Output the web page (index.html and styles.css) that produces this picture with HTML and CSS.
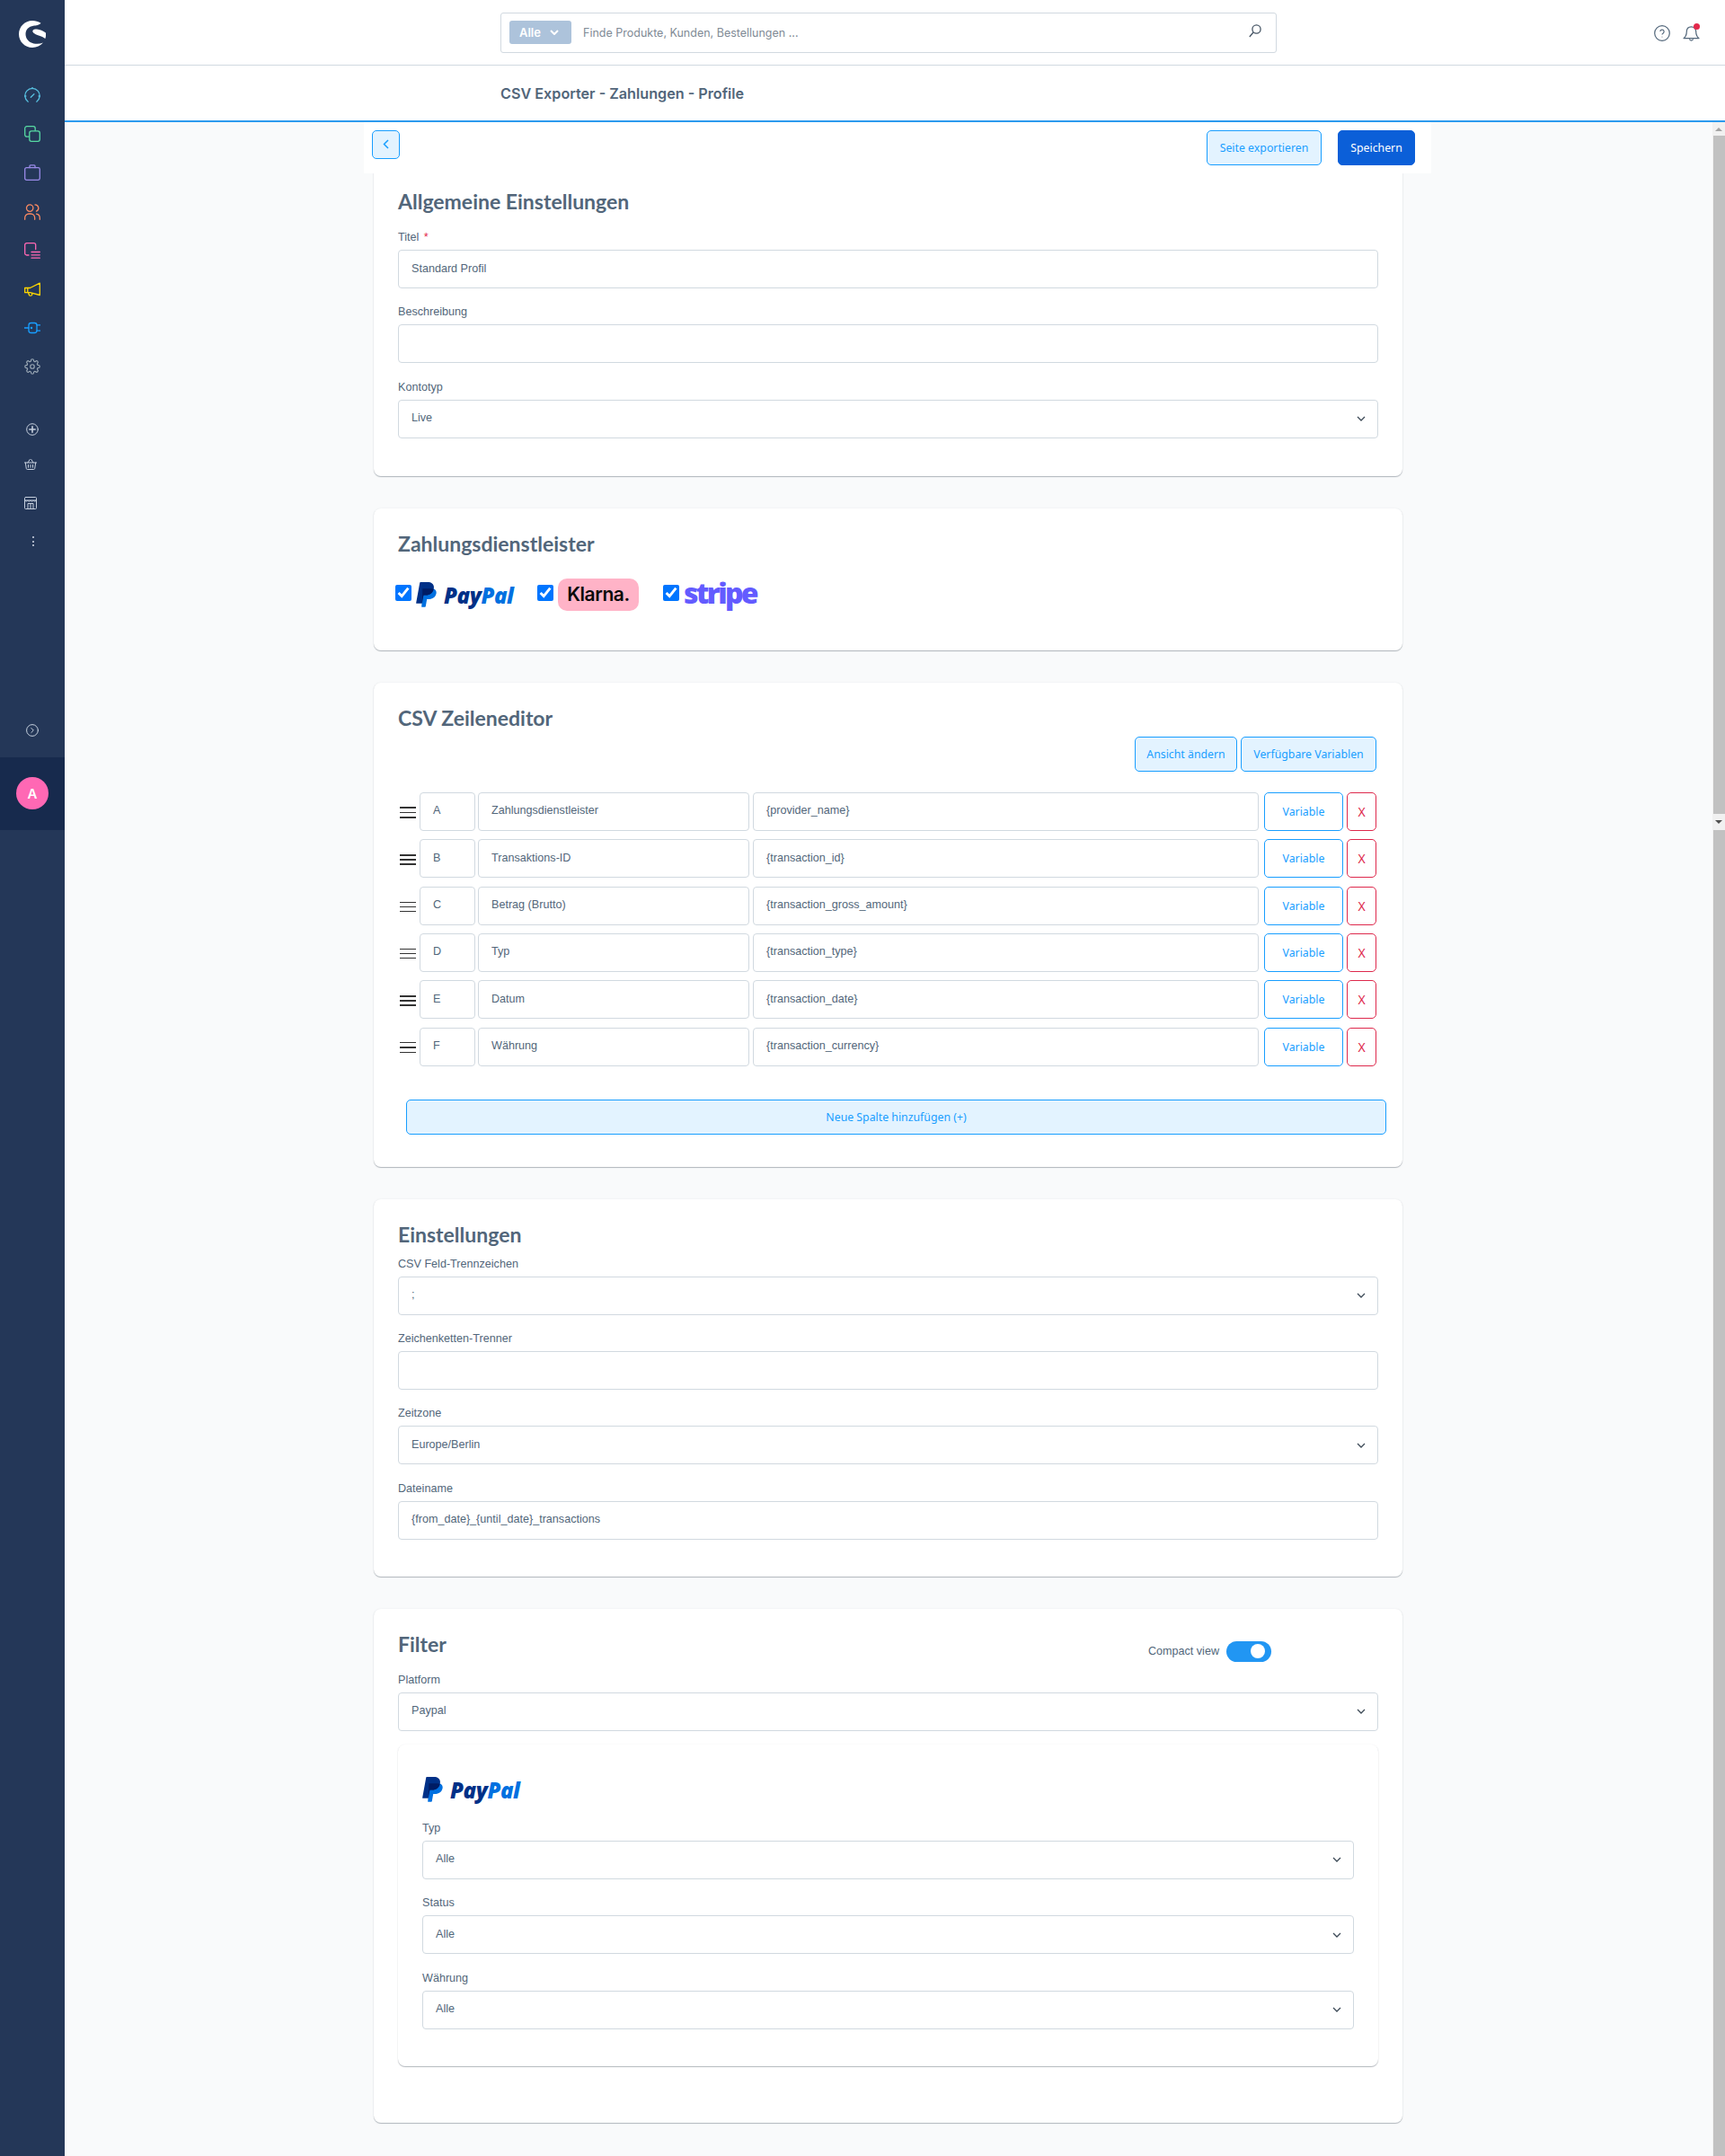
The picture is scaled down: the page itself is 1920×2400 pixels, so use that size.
FILE: index.html
```html
<!DOCTYPE html>
<html lang="de">
<head>
<meta charset="utf-8">
<title>CSV Exporter - Zahlungen - Profile</title>
<link rel="stylesheet" href="styles.css">
</head>
<body>
<div class="app">
  <aside class="sidebar">
    <div class="logo">
      <svg width="30" height="30" viewBox="0 0 30 30"><path fill="#fff" d="M24.5 2.7C21.5 1 18.5 0 15 0 6.7 0 0 6.7 0 15s6.700 15 15 15c4.800 0 9-2 12-5.400-3.500 1.400-7 1.600-10.500.8C11 24.200 7.500 20 7.500 15c0-5 3.500-8.500 8.500-9.300 3-.5 7-.7 8.500-3z"/><path fill="#fff" d="M15.800 10.500c-1.800 2.300 1.700 4.400 6.200 6 3 1 5.500 2 7.300 3.500.8-2 1-4.300.600-6.400-3-2.400-6.500-3.800-9.900-4.100-1.800-.1-3.300 0-4.200 1z"/></svg>
    </div>
    <nav class="nav-main">
      <div class="nav-item"><svg class="ico c-dash" viewBox="0 0 18 18"><path d="M4.200 16.200A8.200 8.200 0 1 1 13.800 16.200"/><path d="M9 .3v1.400M7.300 11.300l3.600-3.600M.7 10h1.200M16.100 10h1.200"/></svg></div>
      <div class="nav-item"><svg class="ico c-prod" viewBox="0 0 18 18"><rect x=".7" y=".7" width="11.500" height="11.500" rx="2.200"/><rect class="fill-side" x="5.800" y="5.800" width="11.500" height="11.500" rx="2.200"/></svg></div>
      <div class="nav-item"><svg class="ico c-ord" viewBox="0 0 18 18"><rect x=".7" y="3.700" width="16.600" height="13.600" rx="1.800"/><path d="M6 3.700V1.800c0-.6.400-1 1-1h4c.6 0 1 .4 1 1v1.900"/></svg></div>
      <div class="nav-item"><svg class="ico c-cust" viewBox="0 0 18 18"><circle cx="6.200" cy="4.600" r="3.700"/><path d="M.7 17.300v-1.800a4.500 4.500 0 0 1 4.500-4.500h2a4.500 4.500 0 0 1 4.500 4.500v1.800M12 .9a3.800 3.800 0 0 1 1.500 7.300M13.500 11.200a4.500 4.500 0 0 1 3.800 4.400v1.700"/></svg></div>
      <div class="nav-item"><svg class="ico c-cont" viewBox="0 0 18 18"><path d="M5 14H2.700a2 2 0 0 1-2-2V2.700a2 2 0 0 1 2-2h8a2 2 0 0 1 2 2v4.800M8 10.500h9.300M8 13.800h9.300M8 17.200h9.300"/></svg></div>
      <div class="nav-item"><svg class="ico c-mark" viewBox="0 0 18 18"><path d="M17.300 2.200v13.300L6.500 12.700H.7V7.500h5.800zM3.800 7.500v5.200M4.500 13l1 2.600c.3.800 3 .9 3.200-.6l-.1-1.400"/></svg></div>
      <div class="nav-item"><svg class="ico c-ext" viewBox="0 0 18 18"><rect x="5" y="3.500" width="9" height="11" rx="2.500"/><path d="M0 9h5M14 5.800h4M14 12.200h4"/><circle cx="8" cy="9" r=".6"/></svg></div>
      <div class="nav-item"><svg class="ico c-set" viewBox="0 0 24 24"><circle cx="12" cy="12" r="3"/><path d="M19.400 15a1.650 1.650 0 0 0 .33 1.820l.06.06a2 2 0 0 1-2.830 2.830l-.06-.06a1.650 1.650 0 0 0-1.820-.33 1.650 1.650 0 0 0-1 1.510V21a2 2 0 0 1-4 0v-.09A1.650 1.650 0 0 0 9 19.400a1.650 1.650 0 0 0-1.820.33l-.06.06a2 2 0 0 1-2.830-2.830l.06-.06a1.650 1.650 0 0 0 .33-1.820 1.650 1.650 0 0 0-1.510-1H3a2 2 0 0 1 0-4h.09A1.650 1.650 0 0 0 4.600 9a1.650 1.650 0 0 0-.33-1.820l-.06-.06a2 2 0 0 1 2.830-2.830l.06.06a1.650 1.650 0 0 0 1.820.33H9a1.650 1.650 0 0 0 1-1.510V3a2 2 0 0 1 4 0v.09a1.650 1.650 0 0 0 1 1.510 1.650 1.650 0 0 0 1.820-.33l.06-.06a2 2 0 0 1 2.830 2.830l-.06.06a1.650 1.650 0 0 0-.33 1.820V9a1.650 1.650 0 0 0 1.510 1H21a2 2 0 0 1 0 4h-.09a1.650 1.650 0 0 0-1.510 1z"/></svg></div>
    </nav>
    <nav class="nav-sub">
      <div class="sub-item sub-first"><svg class="sub-ico" viewBox="0 0 14 14"><circle cx="7" cy="7" r="6.300"/><path class="heavy" d="M7 3.800v6.400M3.800 7h6.400"/></svg></div>
      <div class="sub-item sub-shift"><svg class="sub-ico" viewBox="0 0 14 14"><path d="M.5 5h13M1.300 5l1 6.500c.1.700.5 1 1.200 1h7c.7 0 1.100-.3 1.200-1l1-6.500M4 5l2.200-3.500M10 5L7.800 1.500M4.500 7.500v2.800M7 7.500v2.800M9.500 7.500v2.800"/></svg></div>
      <div class="sub-item sub-shift"><svg class="sub-ico" viewBox="0 0 14 14"><rect x=".5" y=".5" width="13" height="13" rx="1"/><path d="M.5 4h13M.7 4c.8 1.400 2.300 1.400 3.100 0 .8 1.400 2.300 1.400 3.200 0 .8 1.400 2.300 1.400 3.200 0 .8 1.400 2.300 1.400 3.100 0M4 13.500V7.500h6v6M7 7.500v6"/></svg></div>
      <div class="sub-item sub-dots"><span class="dot"></span><span class="dot"></span><span class="dot"></span></div>
    </nav>
    <div class="sub-item sub-expand"><svg class="sub-ico" viewBox="0 0 14 14"><circle cx="7" cy="7" r="6.400"/><path d="M5.800 4.500L8.300 7l-2.500 2.500"/></svg></div>
    <div class="user"><div class="avatar">A</div></div>
  </aside>

  <div class="main">
    <header class="topbar">
      <div class="search">
        <div class="search-type">Alle <svg class="pill-chev" viewBox="0 0 10 6"><path d="M1 1l4 4 4-4"/></svg></div>
        <span class="search-text">Finde Produkte, Kunden, Bestellungen ...</span>
        <svg class="search-ico" viewBox="0 0 14 15"><circle cx="8.500" cy="5.500" r="4.600"/><path d="M5 9L.8 14"/></svg>
      </div>
      <div class="top-actions">
        <svg class="help" viewBox="0 0 18 18"><ellipse cx="9" cy="9" rx="8.300" ry="8.300"/><path d="M6.900 7.100a2.100 2.100 0 1 1 3.300 1.800c-.8.500-1.200.9-1.200 1.700"/><circle class="solid" cx="9" cy="13" r=".5"/></svg>
        <div class="bell-wrap">
          <svg class="bell" viewBox="0 0 19 19"><path d="M9.500 1.800c-3.200 0-5.200 2.300-5.200 5.400 0 3.600-.8 5.400-3.300 7.500h17c-2.500-2.100-3.300-3.900-3.300-7.500 0-3.100-2-5.400-5.200-5.400zM7.500 15.500c.4 2.100 3.600 2.100 4 0"/></svg>
          <span class="bell-dot"></span>
        </div>
      </div>
    </header>
    <div class="smartbar"><h1 class="page-title">CSV Exporter - Zahlungen - Profile</h1></div>

    <div class="workspace">
      <div class="content">
        <div class="actions">
          <button class="btn btn-back"><svg class="back-chev" viewBox="0 0 7 11"><path d="M6 1L1.500 5.500 6 10"/></svg></button>
          <div class="actions-right">
            <button class="btn btn-soft btn-export">Seite exportieren</button>
            <button class="btn btn-primary">Speichern</button>
          </div>
        </div>

        <section class="card card-first">
          <h2 class="card-title">Allgemeine Einstellungen</h2>
          <div class="field"><div class="label">Titel <span class="req">*</span></div><div class="control">Standard Profil</div></div>
          <div class="field"><div class="label">Beschreibung</div><div class="control"></div></div>
          <div class="field"><div class="label">Kontotyp</div><div class="control select"><span>Live</span><svg class="chev" viewBox="0 0 10 6"><path d="M1 1l4 4 4-4"/></svg></div></div>
        </section>

        <section class="card">
          <h2 class="card-title">Zahlungsdienstleister</h2>
          <div class="providers">
            <label class="provider"><input type="checkbox" checked>
              <span class="paypal"><svg class="pp-mark" viewBox="0 0 23 28"><path fill="#0070e0" d="M7.500 7h9c3.800 0 6.700 1.700 6.100 5.600-.6 3.800-3.700 6.300-7.400 6.300h-3l-1.400 8.100a.8.8 0 0 1-.8.700H6.200z"/><path fill="#003087" d="M4.300.6A.8.8 0 0 1 5.100 0H13c4.300 0 7.600 2.300 6.800 6.900-.8 4.800-4.600 7.600-8.800 7.600H8.400L7 23a.8.8 0 0 1-.8.700H.8a.6.6 0 0 1-.6-.7z"/><path fill="#001c64" d="M7.300 7.200h9.200c.9 0 2.300.300 3.100.8-.5 3.800-4.100 6.500-8.600 6.500H8.400L7 21z"/></svg><span class="pp-word"><span class="pp-pay">Pay</span><span class="pp-pal">Pal</span></span></span>
            </label>
            <label class="provider"><input type="checkbox" checked><span class="klarna">Klarna.</span></label>
            <label class="provider"><input type="checkbox" checked><span class="stripe">stripe</span></label>
          </div>
        </section>

        <section class="card card-editor">
          <h2 class="card-title">CSV Zeileneditor</h2>
          <div class="editor-actions">
            <button class="btn btn-soft btn-view">Ansicht ändern</button>
            <button class="btn btn-soft btn-vars">Verfügbare Variablen</button>
          </div>
          <div class="rows">
            <div class="row"><div class="drag mid"><i></i><i></i><i></i></div><div class="control cell-key">A</div><div class="control cell-name">Zahlungsdienstleister</div><div class="control cell-val">{provider_name}</div><button class="btn btn-line btn-var">Variable</button><button class="btn btn-del">X</button></div>
            <div class="row"><div class="drag thick"><i></i><i></i><i></i></div><div class="control cell-key">B</div><div class="control cell-name">Transaktions-ID</div><div class="control cell-val">{transaction_id}</div><button class="btn btn-line btn-var">Variable</button><button class="btn btn-del">X</button></div>
            <div class="row"><div class="drag"><i></i><i></i><i></i></div><div class="control cell-key">C</div><div class="control cell-name">Betrag (Brutto)</div><div class="control cell-val">{transaction_gross_amount}</div><button class="btn btn-line btn-var">Variable</button><button class="btn btn-del">X</button></div>
            <div class="row"><div class="drag"><i></i><i></i><i></i></div><div class="control cell-key">D</div><div class="control cell-name">Typ</div><div class="control cell-val">{transaction_type}</div><button class="btn btn-line btn-var">Variable</button><button class="btn btn-del">X</button></div>
            <div class="row"><div class="drag thick"><i></i><i></i><i></i></div><div class="control cell-key">E</div><div class="control cell-name">Datum</div><div class="control cell-val">{transaction_date}</div><button class="btn btn-line btn-var">Variable</button><button class="btn btn-del">X</button></div>
            <div class="row"><div class="drag mid"><i></i><i></i><i></i></div><div class="control cell-key">F</div><div class="control cell-name">Währung</div><div class="control cell-val">{transaction_currency}</div><button class="btn btn-line btn-var">Variable</button><button class="btn btn-del">X</button></div>
          </div>
          <button class="btn btn-soft btn-add">Neue Spalte hinzufügen (+)</button>
        </section>

        <section class="card">
          <h2 class="card-title card-title-tight">Einstellungen</h2>
          <div class="field"><div class="label">CSV Feld-Trennzeichen</div><div class="control select"><span>;</span><svg class="chev" viewBox="0 0 10 6"><path d="M1 1l4 4 4-4"/></svg></div></div>
          <div class="field"><div class="label">Zeichenketten-Trenner</div><div class="control"></div></div>
          <div class="field"><div class="label">Zeitzone</div><div class="control select"><span>Europe/Berlin</span><svg class="chev" viewBox="0 0 10 6"><path d="M1 1l4 4 4-4"/></svg></div></div>
          <div class="field"><div class="label">Dateiname</div><div class="control">{from_date}_{until_date}_transactions</div></div>
        </section>

        <section class="card card-filter">
          <div class="filter-head">
            <h2 class="card-title">Filter</h2>
            <div class="compact"><span>Compact view</span><div class="toggle"><span class="knob"></span></div></div>
          </div>
          <div class="field field-platform"><div class="label">Platform</div><div class="control select"><span>Paypal</span><svg class="chev" viewBox="0 0 10 6"><path d="M1 1l4 4 4-4"/></svg></div></div>
          <div class="inner">
            <span class="paypal paypal-inner"><svg class="pp-mark" viewBox="0 0 23 28"><path fill="#0070e0" d="M7.500 7h9c3.800 0 6.700 1.700 6.100 5.600-.6 3.800-3.700 6.300-7.400 6.300h-3l-1.400 8.100a.8.8 0 0 1-.8.700H6.200z"/><path fill="#003087" d="M4.300.6A.8.8 0 0 1 5.100 0H13c4.300 0 7.600 2.300 6.800 6.900-.8 4.800-4.600 7.600-8.800 7.600H8.400L7 23a.8.8 0 0 1-.8.700H.8a.6.6 0 0 1-.6-.7z"/><path fill="#001c64" d="M7.300 7.200h9.200c.9 0 2.300.300 3.100.8-.5 3.800-4.100 6.500-8.600 6.500H8.400L7 21z"/></svg><span class="pp-word"><span class="pp-pay">Pay</span><span class="pp-pal">Pal</span></span></span>
            <div class="field"><div class="label">Typ</div><div class="control select"><span>Alle</span><svg class="chev" viewBox="0 0 10 6"><path d="M1 1l4 4 4-4"/></svg></div></div>
            <div class="field"><div class="label">Status</div><div class="control select"><span>Alle</span><svg class="chev" viewBox="0 0 10 6"><path d="M1 1l4 4 4-4"/></svg></div></div>
            <div class="field"><div class="label">Währung</div><div class="control select"><span>Alle</span><svg class="chev" viewBox="0 0 10 6"><path d="M1 1l4 4 4-4"/></svg></div></div>
          </div>
        </section>
      </div>
      <div class="scrollbar">
        <div class="sb-btn"><span class="tri-up"></span></div>
        <div class="sb-thumb"></div>
        <div class="sb-btn sb-btn-down"><span class="tri-down"></span></div>
        <div class="sb-rest"></div>
      </div>
    </div>
  </div>
</div>
</body>
</html>
```
FILE: styles.css
```css
* { box-sizing: border-box; }
html, body { margin: 0; padding: 0; }
body { font-family: "Liberation Sans", Arial, sans-serif; color: #52667a; background: #f9fafb; }
.app { display: flex; width: 1920px; height: 2400px; overflow: hidden; }

/* sidebar */
.sidebar { width: 72px; flex: none; background: #243758; display: flex; flex-direction: column; }
.logo { height: 84.4px; padding: 23px 0 0 21px; }
.logo svg { display: block; }
.nav-item { height: 43.2px; display: flex; align-items: center; justify-content: center; }
.ico { width: 18px; height: 18px; fill: none; stroke-width: 1.3; stroke-linecap: round; stroke-linejoin: round; }
.c-dash { stroke: #57bfdf; }
.c-prod { stroke: #57d9a3; }
.c-ord { stroke: #9a8ae8; }
.c-cust { stroke: #f88962; }
.c-cont { stroke: #ff68b4; }
.c-mark { stroke: #ffd700; }
.c-ext { stroke: #189eff; }
.c-set { stroke: #9aa8b5; stroke-width: 1.6; }
.fill-side { fill: #243758; }
.nav-sub { margin-top: 30.500px; }
.sub-item { height: 43px; display: flex; align-items: center; justify-content: center; }
.sub-first { height: 35px; }
.sub-shift { padding-right: 4px; }
.sub-ico { width: 14px; height: 14px; fill: none; stroke: #c6d0de; stroke-width: 1; stroke-linecap: round; stroke-linejoin: round; }
.sub-ico .heavy { stroke-width: 1.6; }
.sub-dots { flex-direction: column; gap: 2.500px; padding-left: 1px; }
.dot { width: 2px; height: 2px; border-radius: 50%; background: #d6dde8; }
.sub-expand { margin-top: 167px; }
.user { margin-top: 8.500px; height: 81px; background: #172a4d; display: flex; align-items: center; justify-content: center; }
.avatar { width: 36px; height: 36px; border-radius: 50%; background: #ff68b4; color: #fff; font-family: Inter, sans-serif; font-weight: 600; font-size: 15px; display: flex; align-items: center; justify-content: center; }

/* top */
.main { flex: 1; min-width: 0; display: flex; flex-direction: column; }
.topbar { height: 73px; background: #fff; border-bottom: 1px solid #d1d9e0; display: flex; align-items: center; justify-content: center; padding: 0 14px 0 0; position: relative; }
.search { width: 864px; height: 45px; border: 1px solid #d1d9e0; border-radius: 3px; display: flex; align-items: center; padding: 0 16px 0 9px; font-family: Inter, sans-serif; }
.search-type { width: 69px; height: 26px; background: #adc3db; border-radius: 3px; color: #fff; font-size: 13px; font-weight: 600; display: flex; align-items: center; padding-left: 11px; gap: 10px; }
.pill-chev { width: 10px; height: 6px; fill: none; stroke: #fff; stroke-width: 2; }
.search-text { margin-left: 13px; font-size: 12.500px; color: #7f8a95; flex: 1; }
.search-ico { width: 14px; height: 15px; fill: none; stroke: #465565; stroke-width: 1.3; margin-top: -3px; }
.top-actions { position: absolute; right: 28px; top: 28px; display: flex; gap: 14px; }
.help { width: 18px; height: 18px; fill: none; stroke: #52667a; stroke-width: 1.2; }
.help .solid { fill: #52667a; stroke: none; }
.bell-wrap { width: 19px; height: 19px; position: relative; }
.bell { display: block; width: 19px; height: 19px; fill: none; stroke: #52667a; stroke-width: 1.2; stroke-linejoin: round; }
.bell-dot { position: absolute; width: 7px; height: 7px; border-radius: 50%; background: #e3284b; right: 0; top: -2px; }
.smartbar { height: 63px; background: #fff; border-bottom: 2px solid #2c9aee; padding: 0 0 0 485px; display: flex; align-items: center; }
.page-title { margin: 0; font-family: Inter, sans-serif; font-weight: 600; font-size: 16.200px; color: #52667a; }

/* workspace */
.workspace { flex: 1; display: flex; min-height: 0; }
.content { width: 1834px; flex: none; padding-right: 1px; }
.scrollbar { width: 14px; flex: none; display: flex; flex-direction: column; background: #f1f1f1; }
.sb-btn { height: 15px; display: flex; align-items: center; justify-content: center; }
.sb-btn-down { height: 18px; }
.tri-up { width: 0; height: 0; border: 4px solid transparent; border-top: 0; border-bottom: 4px solid #a3a3a3; }
.tri-down { width: 0; height: 0; border: 4px solid transparent; border-bottom: 0; border-top: 4px solid #505050; }
.sb-thumb { height: 755px; background: #c1c1c1; margin-left: 1px; }
.sb-rest { flex: 1; background: #c1c1c1; margin-left: 1px; }

.actions { position: relative; z-index: 1; width: 1188px; height: 57px; margin-left: 333px; background: #fff; display: flex; justify-content: space-between; padding: 9px 18px 0 9px; }
.actions-right { display: flex; gap: 18px; }

.btn { font-family: "Noto Sans", sans-serif; font-size: 12.300px; border-radius: 5px; border: 1px solid #189eff; background: #fff; color: #189eff; display: flex; align-items: center; justify-content: center; padding: 0; cursor: pointer; }
.btn-back { width: 31px; height: 32px; background: #e3f3ff; }
.back-chev { width: 7px; height: 11px; fill: none; stroke: #189eff; stroke-width: 1.5; margin-top: -1px; }
.btn-soft { background: #e3f3ff; }
.btn-export { width: 128px; height: 39px; }
.btn-primary { width: 86px; height: 39px; background: #0b5fd8; border-color: #0b5fd8; color: #fff; }
.btn-view { width: 114px; height: 39px; }
.btn-vars { width: 151px; height: 39px; }
.btn-var { width: 88px; margin-left: 6px; flex: none; }
.btn-del { width: 33px; margin-left: 4px; flex: none; border-color: #de294c; color: #de294c; font-size: 14px; }
.btn-add { width: 1091px; height: 39px; margin: 37px 0 0 9px; }

/* cards */
.card { width: 1145px; margin: 0 auto 36px; padding: 24px 27px 26px; background: #fff; border-radius: 8px; box-shadow: 0 1px 1px rgba(110,120,130,.5), 0 0 2px rgba(110,120,130,.12); }
.card-first { margin-top: -8px; padding-bottom: 27px; }
.card-title { margin: 0 0 14px; font-family: Lato, sans-serif; font-weight: 700; font-size: 23px; line-height: 30px; color: #52667a; }
.card-title-tight { margin-bottom: 7px; }
.field { margin-bottom: 15.330px; }
.label { height: 20px; margin-bottom: 5px; font-size: 12.600px; line-height: 22px; color: #52667a; }
.req { color: #e3284b; margin-left: 2px; }
.control { height: 43px; border: 1px solid #d1d9e0; border-radius: 4px; background: #fff; padding: 0 14px 2px; font-size: 12.600px; color: #52667a; display: flex; align-items: center; }
.select { justify-content: space-between; padding-right: 13px; }
.chev { width: 10px; height: 6px; fill: none; stroke: #3d4a57; stroke-width: 1.3; margin-top: 2px; }

/* providers */
.providers { display: flex; margin: 24px 0 18px -3px; height: 36px; gap: 27px; }
.provider { display: flex; gap: 5px; align-items: flex-start; }
.provider input { width: 18px; height: 18px; margin: 7px 0 0; flex: none; accent-color: #0075ff; }
.paypal { display: flex; align-items: flex-start; gap: 8px; width: 108px; height: 29px; margin-top: 4px; }
.pp-mark { width: 23px; height: 28px; flex: none; }
.pp-word { font-family: "Open Sans", sans-serif; font-style: italic; font-weight: 800; font-size: 24px; line-height: 29px; letter-spacing: -.4px; white-space: nowrap; }
.pp-pay { color: #003087; }
.pp-pal { color: #0070e0; }
.klarna { width: 90px; height: 36px; border-radius: 10px; background: #ffb3c7; color: #0b0b0b; font-family: Inter, sans-serif; font-weight: 600; font-size: 21px; display: flex; align-items: center; justify-content: center; letter-spacing: -.4px; }
.stripe { font-family: "Open Sans", sans-serif; font-weight: 800; font-size: 32px; line-height: 32px; letter-spacing: -2.700px; color: #635bff; height: 36px; }

/* editor */
.card-editor { padding-bottom: 36px; }
.editor-actions { display: flex; justify-content: flex-end; gap: 4px; padding-right: 2px; margin-top: -8px; }
.rows { margin-top: 23px; display: flex; flex-direction: column; gap: 9.330px; padding: 0 2px; }
.row { display: flex; height: 43px; align-items: stretch; }
.drag { width: 18px; flex: none; display: flex; flex-direction: column; justify-content: center; gap: 4px; padding-top: 2px; }
.drag i { display: block; height: 1px; background: #333; }
.drag.mid i { height: 1.500px; }
.drag.thick { gap: 3px; }
.drag.thick i { height: 2px; }
.control.cell-key { width: 62px; margin-left: 4px; flex: none; height: auto; }
.control.cell-name { width: 302px; margin-left: 3px; flex: none; height: auto; }
.control.cell-val { flex: 1; margin-left: 4px; height: auto; }

/* filter */
.card-filter { padding-bottom: 63px; }
.filter-head { display: flex; justify-content: space-between; height: 30px; margin-bottom: 14px; }
.filter-head .card-title { margin: 0; }
.compact { display: flex; align-items: center; gap: 8px; height: 23px; margin: 12px 119px 0 0; font-size: 12.600px; }
.toggle { width: 50px; height: 23px; border-radius: 12px; background: #2196f3; display: flex; align-items: center; justify-content: flex-end; padding-right: 7px; }
.knob { width: 16px; height: 16px; border-radius: 50%; background: #fff; }
.field-platform { margin-bottom: 15px; }
.inner { padding: 36px 27px 26px; border-radius: 8px; background: #fff; box-shadow: 0 1px 1px rgba(110,120,130,.5), 0 0 2px rgba(110,120,130,.08); }
.paypal-inner { display: flex; margin: 0 0 17px; }
```
